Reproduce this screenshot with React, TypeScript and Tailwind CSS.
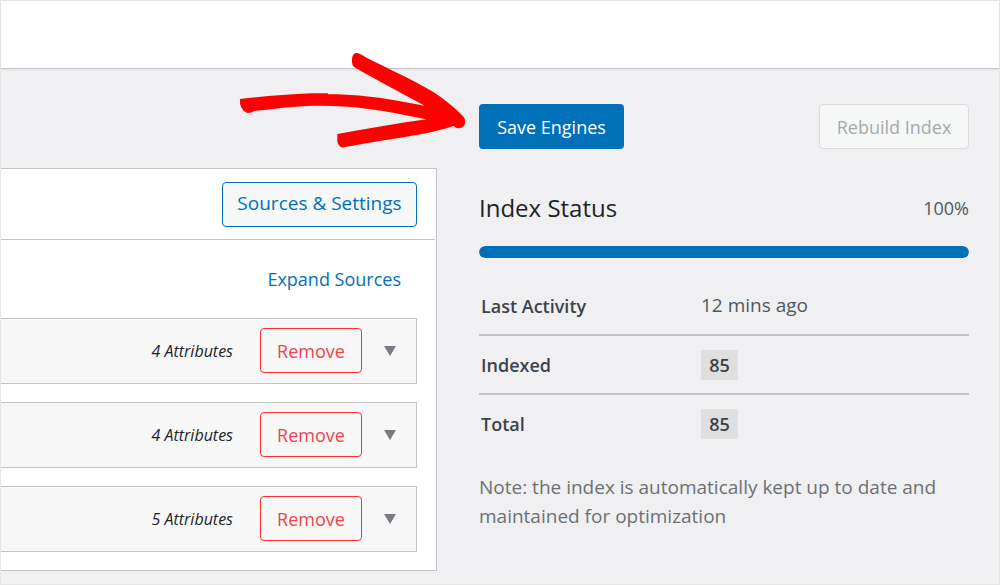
import React from 'react';

interface Source {
  id: number;
  attributes: number;
}

const sources: Source[] = [
  { id: 1, attributes: 4 },
  { id: 2, attributes: 4 },
  { id: 3, attributes: 5 },
];

const SourceRow: React.FC<{ source: Source }> = ({ source }) => (
  <li className="flex h-[66px] items-center justify-end border border-l-0 border-[#c3c4c7] bg-[#f7f7f7] pr-5 pb-px">
    <span className="mr-[27px] text-base italic text-[#1d2327]">{source.attributes} Attributes</span>
    <button
      type="button"
      className="mr-[22px] h-[45px] w-[102px] rounded border border-[#ff2f2f] text-[#f0424a]"
    >
      Remove
    </button>
    <button type="button" aria-label="Toggle source details" className="flex h-6 w-3 items-center">
      <svg viewBox="0 0 12 10" className="h-[10px] w-3 fill-[#787c82]" aria-hidden="true">
        <path d="M0 0h12L6 10z" />
      </svg>
    </button>
  </li>
);

const EnginePanel: React.FC = () => (
  <section className="border border-l-0 border-[#c3c4c7] bg-white">
    <div className="mr-px flex h-[71px] items-center justify-end border-b border-[#c3c4c7] pr-[18px]">
      <button
        type="button"
        className="h-[45px] w-[195px] rounded border border-[#0071b8] bg-[#f6f7f7] text-[19px] text-[#0071b8]"
      >
        Sources &amp; Settings
      </button>
    </div>
    <div className="pr-[19px] pb-[18px]">
      <div className="flex h-[78px] items-center justify-end pr-4">
        <a href="#sources" className="text-[#0071b8]">
          Expand Sources
        </a>
      </div>
      <ul className="flex flex-col gap-[18px]">
        {sources.map((source) => (
          <SourceRow key={source.id} source={source} />
        ))}
      </ul>
    </div>
  </section>
);

// Hand drawn pointer towards the save button
const Arrow: React.FC = () => (
  <svg
    viewBox="60 36 678 288"
    className="pointer-events-none absolute -top-[52px] right-full mr-[13px] h-24 w-[226px] max-w-none fill-[#ff0000]"
    aria-hidden="true"
  >
    <path d="M60 177C125 169 200 163 277 160L323 160L325 163C360 163 400 165 430 168C495 174 555 186 614 197C545 160 475 122 405 83C396 77 396 70 396 58C397 45 402 38 412 39C422 42 428 46 436 51C505 87 570 115 635 153C672 177 705 203 729 229C737 238 737 247 733 256C727 265 717 267 708 263L700 258C668 269 638 276 606 282C525 297 450 306 372 322C362 325 353 314 352 303L352 282C440 266 530 251 619 238C555 225 500 213 440 206C380 198 320 196 260 198C200 201 153 208 103 213C97 216 92 219 83 219C69 214 60 200 60 187Z" />
  </svg>
);

const CountBadge: React.FC<{ count: number }> = ({ count }) => (
  <span className="block h-[30px] w-[37px] bg-[#dfdfe0] text-center text-lg leading-[30px] font-semibold">
    {count}
  </span>
);

const IndexStatus: React.FC = () => {
  const progress = 100;

  return (
    <section>
      <div className="flex items-center justify-between">
        <h2 className="text-2xl font-medium text-[#1d2327]">Index Status</h2>
        <span className="text-[#50575e]">{progress}%</span>
      </div>
      <div
        role="progressbar"
        aria-label="Index progress"
        aria-valuenow={progress}
        className="mt-[22px] h-3 overflow-hidden rounded-full bg-[#dcdcde]"
      >
        <div className="h-full rounded-full bg-[#0071b8]" style={{ width: `${progress}%` }} />
      </div>
      <table className="mt-[19px] w-full text-left text-[#3c434a]">
        <tbody>
          <tr className="h-[58px] border-b-2 border-[#c3c4c7]">
            <th scope="row" className="w-[222px] pl-0.5 font-semibold">Last Activity</th>
            <td className="text-[19px] text-[#50575e]">12 mins ago</td>
          </tr>
          <tr className="h-[59px] border-b-2 border-[#c3c4c7]">
            <th scope="row" className="pl-0.5 font-semibold">Indexed</th>
            <td>
              <CountBadge count={85} />
            </td>
          </tr>
          <tr className="h-[59px]">
            <th scope="row" className="pl-0.5 font-semibold">Total</th>
            <td>
              <CountBadge count={85} />
            </td>
          </tr>
        </tbody>
      </table>
      <p className="mt-5 text-[19px] leading-[29px] text-[#6c7075]">
        Note: the index is automatically kept up to date and maintained for optimization
      </p>
    </section>
  );
};

export default function App() {
  return (
    <div className="min-h-screen border border-[#e6e6e6] bg-[#f0f0f2] font-['Open_Sans','Noto_Sans',sans-serif] text-lg">
      <header className="h-[68px] border-b border-[#c3c4c7] bg-white shadow-xs" />
      <main className="flex items-start gap-[42px] pr-[30px]">
        <div className="min-w-0 flex-1 pt-[99px]">
          <EnginePanel />
        </div>
        <aside className="w-[490px] shrink-0 pt-[35px]">
          <div className="mb-[43px] flex items-center justify-between">
            <div className="relative">
              <Arrow />
              <button type="button" className="h-[45px] w-[145px] rounded bg-[#0071b8] text-white">
                Save Engines
              </button>
            </div>
            <button
              type="button"
              disabled
              className="h-[45px] w-[150px] rounded border border-[#dcdcde] bg-[#f6f7f7] text-[#a7aaad]"
            >
              Rebuild Index
            </button>
          </div>
          <IndexStatus />
        </aside>
      </main>
    </div>
  );
}
